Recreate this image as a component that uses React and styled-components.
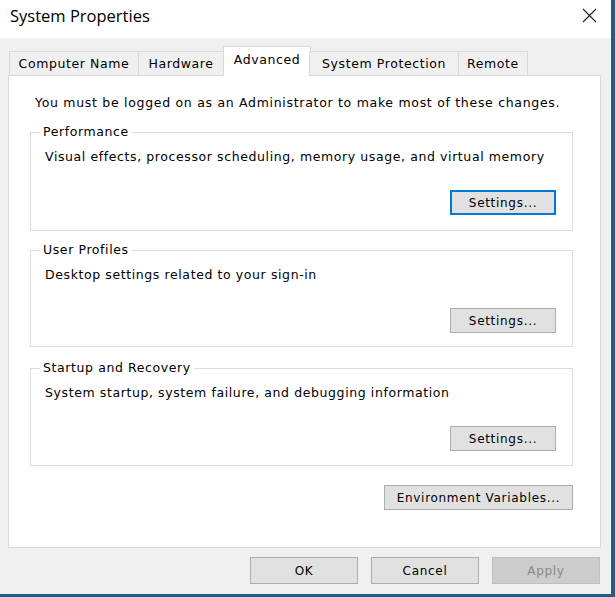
import React from "react";
import styled, { createGlobalStyle } from "styled-components";

const GlobalStyle = createGlobalStyle`
  html, body {
    margin: 0;
    padding: 0;
    background: #1d5f86;
  }
  * {
    box-sizing: border-box;
  }
`;

const Window = styled.div`
  width: 611px;
  height: 594px;
  display: flex;
  flex-direction: column;
  background: #f0f0f0;
  font-family: "DejaVu Sans", "Noto Sans CJK JP", sans-serif;
  font-size: 12.5px;
  letter-spacing: 0.6px;
  color: #000;
`;

const TitleBar = styled.div`
  height: 38px;
  background: #fff;
  display: flex;
  align-items: center;
  justify-content: space-between;
  padding: 0 14px 8px 10px;
`;

const Title = styled.div`
  font-family: "Open Sans", "Noto Sans", sans-serif;
  font-size: 16.5px;
  letter-spacing: 0;
`;

const CloseButton = styled.div`
  width: 16px;
  height: 16px;
  display: flex;
  align-items: center;
  justify-content: center;
`;

const Body = styled.div`
  flex: 1;
  display: flex;
  flex-direction: column;
  padding: 9px 10px 0 8px;
`;

const TabList = styled.div`
  display: flex;
  align-items: flex-end;
  height: 29px;
  padding-left: 2px;
  position: relative;
  z-index: 1;
  margin-bottom: -1px;
`;

const Tab = styled.div`
  width: ${(p) => p.$w}px;
  height: ${(p) => (p.$active ? 30 : 25)}px;
  display: flex;
  align-items: center;
  justify-content: center;
  padding-bottom: ${(p) => (p.$active ? 4 : 0)}px;
  background: ${(p) => (p.$active ? "#fff" : "#f0f0f0")};
  border: 1px solid #d9d9d9;
  border-bottom: ${(p) => (p.$active ? "1px solid #fff" : "1px solid #d9d9d9")};
  margin-left: -1px;
  margin-right: ${(p) => (p.$active ? -1 : 0)}px;
  white-space: nowrap;
`;

const Panel = styled.div`
  height: 473px;
  background: #fff;
  border: 1px solid #d9d9d9;
  padding: 20px 27px 0 21px;
  display: flex;
  flex-direction: column;
`;

const Notice = styled.div`
  line-height: 14px;
  padding-left: 5px;
  margin-bottom: 15px;
  white-space: nowrap;
  letter-spacing: 0.7px;
`;

const Group = styled.fieldset`
  margin: 0 0 ${(p) => p.$gap}px 0;
  padding: 0 16px ${(p) => p.$bottom}px 14px;
  border: 1px solid #dcdcdc;
  display: flex;
  flex-direction: column;
  min-width: 0;
`;

const Legend = styled.legend`
  padding: 0 3px;
  margin-left: -5px;
  line-height: 14px;
`;

const Description = styled.div`
  line-height: 14px;
  margin-top: 11px;
  white-space: nowrap;
`;

const ButtonRow = styled.div`
  display: flex;
  justify-content: flex-end;
  margin-top: ${(p) => p.$top || 0}px;
`;

const Button = styled.button`
  width: ${(p) => p.$w}px;
  height: ${(p) => p.$h || 25}px;
  padding: 0;
  font-family: "DejaVu Sans", "Noto Sans CJK JP", sans-serif;
  font-size: 12px;
  letter-spacing: 0.7px;
  color: ${(p) => (p.disabled ? "#8a8a8a" : "#000")};
  background: ${(p) => (p.disabled ? "#cccccc" : "#e1e1e1")};
  border: ${(p) =>
    p.$focused
      ? "2px solid #0078d7"
      : p.disabled
      ? "1px solid #bfbfbf"
      : "1px solid #adadad"};
  cursor: default;
`;

const Footer = styled.div`
  display: flex;
  justify-content: flex-end;
  gap: 13px;
  padding: 9px 1px 0 0;
`;

const tabs = [
  { label: "Computer Name", w: 130 },
  { label: "Hardware", w: 86 },
  { label: "Advanced", w: 88, active: true },
  { label: "System Protection", w: 150 },
  { label: "Remote", w: 70 },
];

const groups = [
  {
    title: "Performance",
    text: "Visual effects, processor scheduling, memory usage, and virtual memory",
    focused: true,
    gap: 12,
    bottom: 15,
  },
  {
    title: "User Profiles",
    text: "Desktop settings related to your sign-in",
    gap: 14,
    bottom: 13,
  },
  {
    title: "Startup and Recovery",
    text: "System startup, system failure, and debugging information",
    gap: 0,
    bottom: 14,
  },
];

export default function App() {
  return (
    <>
      <GlobalStyle />
      <Window>
        <TitleBar>
          <Title>System Properties</Title>
          <CloseButton>
            <svg width="15" height="15" viewBox="0 0 15 15">
              <path d="M1 1 L14 14 M14 1 L1 14" stroke="#222" strokeWidth="1.1" />
            </svg>
          </CloseButton>
        </TitleBar>
        <Body>
          <TabList>
            {tabs.map((t) => (
              <Tab key={t.label} $w={t.w} $active={t.active}>
                {t.label}
              </Tab>
            ))}
          </TabList>
          <Panel>
            <Notice>
              You must be logged on as an Administrator to make most of these changes.
            </Notice>
            {groups.map((g) => (
              <Group key={g.title} $gap={g.gap} $bottom={g.bottom}>
                <Legend>{g.title}</Legend>
                <Description>{g.text}</Description>
                <ButtonRow $top={26}>
                  <Button $w={106} $focused={g.focused}>
                    Settings...
                  </Button>
                </ButtonRow>
              </Group>
            ))}
            <ButtonRow $top={19}>
              <Button $w={189}>Environment Variables...</Button>
            </ButtonRow>
          </Panel>
          <Footer>
            <Button $w={108} $h={27}>OK</Button>
            <Button $w={108} $h={27}>Cancel</Button>
            <Button $w={108} $h={27} disabled>
              Apply
            </Button>
          </Footer>
        </Body>
      </Window>
    </>
  );
}
